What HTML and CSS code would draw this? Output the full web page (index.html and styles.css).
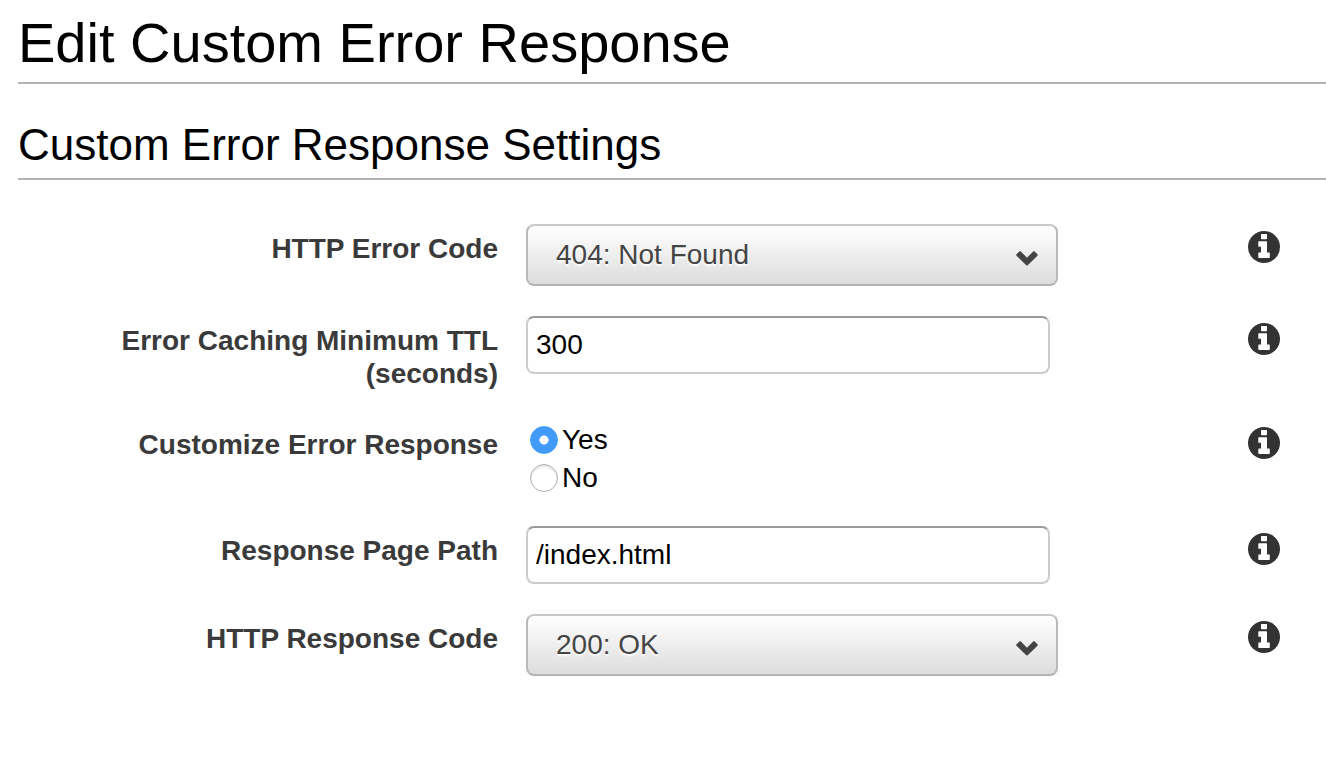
FILE: index.html
```html
<!DOCTYPE html>
<html lang="en">
<head>
<meta charset="utf-8">
<meta name="viewport" content="width=device-width, initial-scale=1">
<title>Edit Custom Error Response</title>
<link rel="stylesheet" href="styles.css">
</head>
<body>
<svg class="sprite" aria-hidden="true">
  <symbol id="info" viewBox="0 0 32 32">
    <circle cx="16" cy="16" r="16" fill="#333"/>
    <path fill="#fff" d="M13.600 3h4.800q.6 0 .6.6v4q0 .6-.6.6h-4.800q-.6 0-.6-.6v-4q0-.6.6-.6zM10.900 10.200h7.500q.6 0 .6.6v10.800h2.200q.6 0 .6.6v4.100q0 .6-.6.6H10.900q-.6 0-.6-.6v-4.100q0-.6.6-.6h2.100v-5.800h-2.100q-.6 0-.6-.6v-4.400q0-.6.6-.6z"/>
  </symbol>
  <symbol id="chevron" viewBox="0 0 22 15">
    <path fill="#444" d="M.5 3.300 3.400.4q.7-.7 1.400 0L11 6.700 17.200.4q.7-.7 1.400 0l2.900 2.900q.6.700 0 1.400l-9.800 9.500q-.7.6-1.400 0L.5 4.700q-.6-.7 0-1.400z"/>
  </symbol>
</svg>
<main class="page">
  <h1 class="title">Edit Custom Error Response</h1>
  <h2 class="subtitle">Custom Error Response Settings</h2>
  <form class="form">
    <div class="row">
      <label class="label" for="error-code">HTTP Error Code</label>
      <div class="select-box">
        <select class="select" id="error-code"><option>404: Not Found</option></select>
        <svg class="chevron" aria-hidden="true"><use href="#chevron"/></svg>
      </div>
      <button class="info" type="button" aria-label="About HTTP Error Code"><svg class="info-icon"><use href="#info"/></svg></button>
    </div>
    <div class="row">
      <label class="label" for="ttl">Error Caching Minimum TTL (seconds)</label>
      <input class="input" id="ttl" type="text" value="300">
      <button class="info" type="button" aria-label="About Error Caching Minimum TTL"><svg class="info-icon"><use href="#info"/></svg></button>
    </div>
    <div class="row" role="radiogroup" aria-labelledby="customize">
      <span class="label" id="customize">Customize Error Response</span>
      <div class="radios">
        <label class="choice"><input class="radio" type="radio" name="customize" checked>Yes</label>
        <label class="choice"><input class="radio" type="radio" name="customize">No</label>
      </div>
      <button class="info" type="button" aria-label="About Customize Error Response"><svg class="info-icon"><use href="#info"/></svg></button>
    </div>
    <div class="row">
      <label class="label" for="path">Response Page Path</label>
      <input class="input" id="path" type="text" value="/index.html">
      <button class="info" type="button" aria-label="About Response Page Path"><svg class="info-icon"><use href="#info"/></svg></button>
    </div>
    <div class="row">
      <label class="label" for="response-code">HTTP Response Code</label>
      <div class="select-box">
        <select class="select" id="response-code"><option>200: OK</option></select>
        <svg class="chevron" aria-hidden="true"><use href="#chevron"/></svg>
      </div>
      <button class="info" type="button" aria-label="About HTTP Response Code"><svg class="info-icon"><use href="#info"/></svg></button>
    </div>
  </form>
</main>
</body>
</html>
```
FILE: styles.css
```css
* {
  box-sizing: border-box;
}

body {
  margin: 0;
  background: #fff;
  color: #000;
  font: 28px/33px "Liberation Sans", Arial, sans-serif;
}

.sprite {
  display: none;
}

.page {
  padding: 10px 0 30px 18px;
}

.title,
.subtitle {
  margin: 0;
  border-bottom: 2px solid #b4b4b4;
  font-weight: 400;
}

.title {
  padding-bottom: 6px;
  font-size: 56px;
  line-height: 66px;
}

.subtitle {
  margin-top: 34px;
  padding-bottom: 6px;
  font-size: 44px;
  line-height: 54px;
}

.form {
  display: flex;
  flex-direction: column;
  gap: 30px;
  padding: 44px 46px 0 0;
}

.row {
  display: grid;
  grid-template-columns: minmax(0, 480fr) minmax(0, 532fr) minmax(0, 194fr);
  column-gap: 28px;
  align-items: start;
}

.label {
  padding: 8px 0 0 80px;
  color: #3a3a3a;
  font-weight: 700;
  text-align: right;
}

.select-box {
  position: relative;
}

.select {
  appearance: none;
  display: block;
  width: 100%;
  height: 62px;
  padding: 0 60px 2px 28px;
  border: 2px solid;
  border-color: #c8c8c8 #b8b8b8 #b4b4b4;
  border-radius: 8px;
  background: linear-gradient(#fff, #ddd);
  color: #444;
  font: inherit;
  text-shadow: 0 2px 2px #fff;
}

.chevron {
  position: absolute;
  top: 27px;
  right: 20px;
  width: 22px;
  height: 15px;
  pointer-events: none;
}

.input {
  height: 58px;
  margin-right: 8px;
  padding: 0 8px;
  border: 2px solid #ccc;
  border-top-color: #999;
  border-radius: 8px;
  background: #fff;
  color: #000;
  font: inherit;
}

.radios {
  display: flex;
  flex-direction: column;
  align-items: flex-start;
}

.choice {
  display: flex;
  align-items: center;
  gap: 4px;
  height: 38px;
  padding-left: 4px;
}

.radio {
  appearance: none;
  width: 28px;
  height: 28px;
  margin: 2px 0 0;
  border: 1px solid #b0b0b0;
  border-radius: 50%;
  background: #fff;
  box-shadow: inset 0 2px 2px #e4e4e4;
}

.radio:checked {
  border-color: #429bf9;
  background: radial-gradient(circle, #fff 4px, #429bf9 5px);
  box-shadow: none;
}

.info {
  justify-self: end;
  margin-top: 7px;
  padding: 0;
  border: 0;
  background: none;
}

.info-icon {
  display: block;
  width: 32px;
  height: 32px;
}
```
